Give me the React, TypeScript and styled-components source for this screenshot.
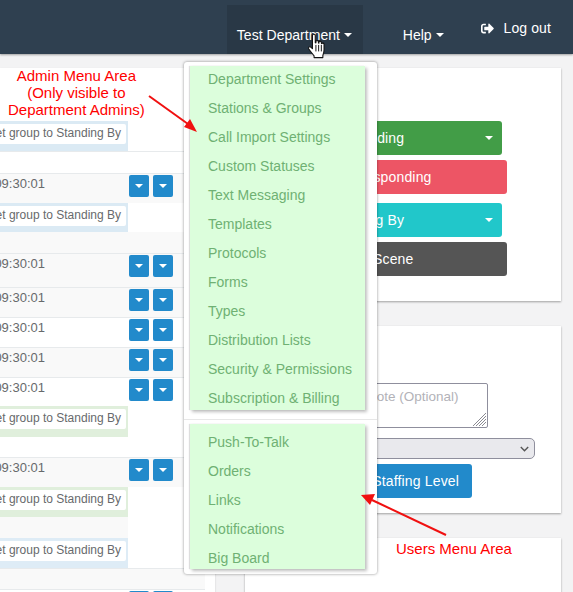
import React from "react";
import styled, { createGlobalStyle } from "styled-components";
import { FaSignOutAlt } from "react-icons/fa";

const Global = createGlobalStyle`
  html, body { margin: 0; padding: 0; background: #f3f3f4; }
  body { font-family: "Liberation Sans", Arial, sans-serif; font-size: 14px; color: #676a6c; }
  * { box-sizing: border-box; }
`;

const Page = styled.div`
  position: relative;
  width: 573px;
  height: 592px;
  overflow: hidden;
`;

const Nav = styled.header`
  display: flex;
  justify-content: flex-end;
  align-items: stretch;
  height: 54px;
  padding: 5px 22px 0 0;
  background: #2f4050;
  box-shadow: 0 1px 2px rgba(0, 0, 0, 0.35);
  color: #fff;
`;

const DeptItem = styled.div`
  display: flex;
  align-items: center;
  gap: 4px;
  width: 136px;
  padding: 11px 0 0 10px;
  margin-right: 40px;
  background: #293846;
  letter-spacing: 0.03px;
`;

const HelpItem = styled.div`
  display: flex;
  align-items: center;
  gap: 4px;
  padding-top: 11px;
  margin-right: 37px;
`;

const LogoutItem = styled.div`
  display: flex;
  align-items: center;
  gap: 10px;
  height: 46px;
  letter-spacing: 0.1px;
`;

const Caret = styled.span`
  display: inline-block;
  width: 0;
  height: 0;
  border-left: 4px solid transparent;
  border-right: 4px solid transparent;
  border-top: 4px solid #fff;
`;

const Cursor = styled.svg`
  position: absolute;
  left: 307px;
  top: 33px;
`;

const Main = styled.main`
  display: flex;
  align-items: flex-start;
  padding-top: 14px;
`;

const LeftPanel = styled.section`
  flex: 0 0 215px;
  height: 540px;
  padding-right: 10px;
  background: #fff;
  box-shadow: 0 1px 2px rgba(0, 0, 0, 0.15);
`;

const Block = styled.div<{ $h: number; $bg?: string; $line?: boolean; $narrow?: boolean }>`
  height: ${(p) => p.$h}px;
  width: ${(p) => (p.$narrow ? "128px" : "100%")};
  background: ${(p) => p.$bg ?? "#fff"};
  border-top: ${(p) => (p.$line ? "1px solid #e7eaec" : "none")};
`;

const TableRow = styled(Block)`
  display: flex;
  align-items: flex-start;
  padding-top: 1px;
`;

const Time = styled.div`
  display: flex;
  justify-content: flex-end;
  flex: 0 0 45px;
  overflow: hidden;
  margin-right: 84px;
  line-height: 17px;
  font-size: 13px;
  white-space: nowrap;
`;

const Actions = styled.div`
  display: flex;
  gap: 4px;
`;

const SmallButton = styled.button`
  display: flex;
  align-items: center;
  justify-content: center;
  width: 20px;
  height: 22px;
  padding: 0;
  border: none;
  border-radius: 2px;
  background: #228acb;
`;

const NoteWrap = styled.div<{ $h: number; $bg: string }>`
  width: 128px;
  height: ${(p) => p.$h}px;
  padding-top: 3px;
  background: ${(p) => p.$bg};
`;

const NoteBox = styled.div`
  display: flex;
  justify-content: flex-end;
  width: 126px;
  height: 20px;
  padding-right: 5px;
  overflow: hidden;
  background: #fff;
  border-radius: 0 2px 2px 0;
  font-size: 12px;
  line-height: 19px;
  white-space: nowrap;
`;

const RightColumn = styled.div`
  display: flex;
  flex-direction: column;
  gap: 25px;
  width: 316px;
  margin-left: 30px;
`;

const Card = styled.section<{ $h: number; $top: number }>`
  display: flex;
  flex-direction: column;
  align-items: flex-start;
  height: ${(p) => p.$h}px;
  padding: ${(p) => p.$top}px 0 0 15px;
  background: #fff;
  box-shadow: 0 1px 2px rgba(0, 0, 0, 0.35);
`;

const StatusButton = styled.button<{ $bg: string; $w: number; $mt: number; $pl: number }>`
  display: flex;
  align-items: center;
  justify-content: space-between;
  width: ${(p) => p.$w}px;
  height: 34px;
  margin-top: ${(p) => p.$mt}px;
  padding: 0 9px 0 ${(p) => p.$pl}px;
  border: none;
  border-radius: 3px;
  background: ${(p) => p.$bg};
  color: #fff;
  font: 14px "Liberation Sans", Arial, sans-serif;
  letter-spacing: 0.15px;
`;

const NoteField = styled.div`
  position: relative;
  width: 130px;
  height: 45px;
  margin-left: 98px;
`;

const NoteArea = styled.textarea`
  display: block;
  width: 100%;
  height: 100%;
  padding: 5px 8px;
  border: 1px solid #8f8f9d;
  border-radius: 2px;
  background: #fff;
  font: 13.5px "Liberation Sans", Arial, sans-serif;
  resize: none;
  &::placeholder { color: #b2b2b8; opacity: 1; }
`;

const Grip = styled.svg`
  position: absolute;
  right: 2px;
  bottom: 2px;
`;

const SelectField = styled.div`
  position: relative;
  width: 275px;
  height: 21px;
  margin-top: 10px;
`;

const LevelSelect = styled.select`
  display: block;
  width: 100%;
  height: 100%;
  appearance: none;
  border: 1px solid #8f8f9d;
  border-radius: 5px;
  background-color: #e9e9ed;
  font: 13px "Liberation Sans", Arial, sans-serif;
`;

const Chevron = styled.svg`
  position: absolute;
  right: 6px;
  top: 8px;
`;

const SaveButton = styled.button`
  width: 138px;
  height: 34px;
  margin: 5px 0 0 74px;
  padding: 0 13px 0 0;
  border: none;
  border-radius: 3px;
  background: #228acb;
  color: #fff;
  font: 14px "Liberation Sans", Arial, sans-serif;
  letter-spacing: 0.15px;
  text-align: right;
`;

const Menu = styled.nav`
  position: absolute;
  left: 184px;
  top: 62px;
  display: flex;
  flex-direction: column;
  width: 193px;
  height: 512px;
  padding: 4px 0 0 6px;
  background: #fff;
  border-radius: 3px;
  box-shadow: 0 0 3px rgba(0, 0, 0, 0.45);
`;

const MenuGroup = styled.div<{ $h: number; $pt: number }>`
  display: grid;
  grid-auto-rows: 29px;
  width: 175px;
  height: ${(p) => p.$h}px;
  padding: ${(p) => p.$pt}px 0 0 18px;
  background: #dcfedc;
  box-shadow: 2px 2px 3px rgba(0, 0, 0, 0.25), -1px 0 1px rgba(0, 0, 0, 0.12);
`;

const MenuLink = styled.a`
  line-height: 27px;
  color: #6fb173;
  font-size: 14px;
  white-space: nowrap;
`;

const Divider = styled.div`
  height: 1px;
  margin: 9px 0 4px -6px;
  background: #e7e7e7;
`;

const RedNote = styled.div<{ $x: number; $y: number }>`
  position: absolute;
  left: ${(p) => p.$x}px;
  top: ${(p) => p.$y}px;
  color: #ff0000;
  font-size: 15px;
  line-height: 17px;
  text-align: center;
  white-space: nowrap;
`;

const ArrowLayer = styled.svg`
  position: absolute;
  left: 0;
  top: 0;
  pointer-events: none;
`;

const BLUE = "#dbeaf4";
const GREEN = "#e0efdc";
const GREY = "#f9f9f9";

const Row = ({ h, grey, line = true }: { h: number; grey?: boolean; line?: boolean }) => (
  <TableRow $h={h} $bg={grey ? GREY : "#fff"} $line={line}>
    <Time>09:30:01</Time>
    <Actions>
      <SmallButton><Caret /></SmallButton>
      <SmallButton><Caret /></SmallButton>
    </Actions>
  </TableRow>
);

const Note = ({ h, bg }: { h: number; bg: string }) => (
  <NoteWrap $h={h} $bg={bg}>
    <NoteBox>Set group to Standing By</NoteBox>
  </NoteWrap>
);

const admin = [
  "Department Settings",
  "Stations & Groups",
  "Call Import Settings",
  "Custom Statuses",
  "Text Messaging",
  "Templates",
  "Protocols",
  "Forms",
  "Types",
  "Distribution Lists",
  "Security & Permissions",
  "Subscription & Billing",
];
const users = ["Push-To-Talk", "Orders", "Links", "Notifications", "Big Board"];

export default function App() {
  return (
    <Page>
      <Global />
      <Nav>
        <DeptItem>Test Department <Caret /></DeptItem>
        <HelpItem>Help <Caret /></HelpItem>
        <LogoutItem><FaSignOutAlt size={13} /> Log out</LogoutItem>
      </Nav>
      <Main>
        <LeftPanel>
          <Block $h={53} />
          <Note h={30} bg={BLUE} />
          <Block $h={22} $line />
          <Row h={30} grey />
          <Note h={29} bg={BLUE} />
          <Block $h={21} $bg={GREY} />
          <Row h={34} grey />
          <Row h={30} grey />
          <Row h={30} />
          <Row h={30} grey />
          <Row h={29} />
          <Note h={31} bg={GREEN} />
          <Block $h={20} />
          <Row h={30} grey />
          <Note h={30} bg={GREEN} />
          <Block $h={21} $bg={GREY} $narrow />
          <Note h={30} bg="#deecf6" />
          <Block $h={21} $bg={GREY} $line />
          <Row h={30} />
        </LeftPanel>
        <RightColumn>
          <Card $h={233} $top={53}>
            <StatusButton $bg="#429d47" $w={242} $mt={0} $pl={68}>Responding <Caret /></StatusButton>
            <StatusButton $bg="#ed5565" $w={247} $mt={5} $pl={69}>Not Responding</StatusButton>
            <StatusButton $bg="#21c7ca" $w={242} $mt={9} $pl={67}>Standing By <Caret /></StatusButton>
            <StatusButton $bg="#555555" $w={247} $mt={5} $pl={90}>On Scene</StatusButton>
          </Card>
          <Card $h={187} $top={57}>
            <NoteField>
              <NoteArea placeholder="Note (Optional)" />
              <Grip width="14" height="14" viewBox="0 0 14 14">
                <path d="M1 14L14 1M4 14L14 4M7 14L14 7M10 14L14 10" stroke="#8a8a92" strokeWidth="1" fill="none" />
              </Grip>
            </NoteField>
            <SelectField>
              <LevelSelect><option></option></LevelSelect>
              <Chevron width="9" height="6" viewBox="0 0 9 6">
                <path d="M.8 1L4.500 4.700 8.200 1" stroke="#555" strokeWidth="1.400" fill="none" />
              </Chevron>
            </SelectField>
            <SaveButton>Set Staffing Level</SaveButton>
          </Card>
          <Card $h={80} $top={0} />
        </RightColumn>
      </Main>
      <Menu>
        <MenuGroup $h={344} $pt={0}>
          {admin.map((a) => <MenuLink key={a}>{a}</MenuLink>)}
        </MenuGroup>
        <Divider />
        <MenuGroup $h={145} $pt={5}>
          {users.map((a) => <MenuLink key={a}>{a}</MenuLink>)}
        </MenuGroup>
      </Menu>
      <RedNote $x={8} $y={67}>Admin Menu Area<br />(Only visible to<br />Department Admins)</RedNote>
      <RedNote $x={396} $y={540}>Users Menu Area</RedNote>
      <ArrowLayer width="573" height="592">
        <g fill="#f01010">
          <line x1="149" y1="96" x2="188" y2="124" stroke="#f01010" strokeWidth="2" />
          <polygon points="197,132 184,127 190,119" />
          <line x1="446" y1="535" x2="372" y2="500" stroke="#f01010" strokeWidth="2" />
          <polygon points="361,495 375,494 370,505" />
        </g>
      </ArrowLayer>
      <Cursor width="20" height="26" viewBox="0 0 18 24">
        <path
          d="M5 1.500c1-.8 2.300-.3 2.400 1V9l.6.1V7.600c.4-1 1.900-1 2.200 0l.2 1.700.4.1V8.200c.4-1 1.900-.9 2.100.2l.2 1.300.4.1c.4-.8 1.900-.6 2 .5v5.200c0 2.500-.5 3.600-1.100 5.200v2H6.300v-1.600C4.800 19 3 17.200 1.300 14.500c-.6-1.200.6-2.300 1.900-1.500L4.800 14.500V2.500z"
          fill="#fff"
          stroke="#111"
          strokeWidth="1"
          strokeLinejoin="round"
        />
        <path d="M8 11v6M10.500 11v6M13 11v6" stroke="#111" strokeWidth="0.9" />
      </Cursor>
    </Page>
  );
}
